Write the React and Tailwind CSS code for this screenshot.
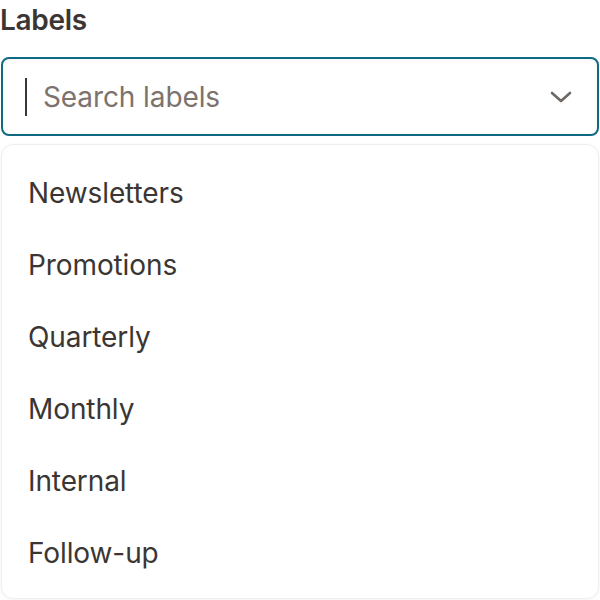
import { useState } from "react";

const labels = ["Newsletters", "Promotions", "Quarterly", "Monthly", "Internal", "Follow-up"];

const Chevron = () => (
   <svg width="24" height="14" viewBox="0 0 24 14" fill="none" className="text-[#6f6762]">
      <path d="M3 3l9 8 9-8" stroke="currentColor" strokeWidth="2.6" strokeLinecap="round" strokeLinejoin="round" />
   </svg>
);

const App = () => {
   const [query, setQuery] = useState("");

   return (
      <div className="w-[600px] h-[600px] overflow-hidden bg-white font-['Inter','Noto_Sans',sans-serif] text-[#3b3633]">
         <p className="h-[42px] pt-[4px] text-[28px] font-semibold leading-[32px] tracking-[-0.3px]">Labels</p>

         <div className="mt-[15px] mx-px h-[79px] flex items-center gap-x-[16px] pl-[22px] pr-[24px] rounded-[8px] border-2 border-[#0e6a80] shadow-[inset_0_2px_6px_rgba(0,0,0,0.04)]">
            <span className="w-[2px] h-[38px] bg-[#3b3633]" />
            <input
               value={query}
               onChange={(e) => setQuery(e.target.value)}
               placeholder="Search labels"
               className="flex-1 bg-transparent outline-none text-[28px] tracking-[-0.1px] placeholder:text-[#7c736d]"
            />
            <Chevron />
         </div>

         <ul className="mt-[8px] mx-px h-[455px] rounded-[12px] border border-[#f0eeec] shadow-[0_1px_4px_rgba(0,0,0,0.05)] pt-[12px]">
            {labels
               .filter((l) => l.toLowerCase().includes(query.toLowerCase()))
               .map((label) => (
                  <li key={label} className="h-[72px] flex items-center px-[26px] text-[28px] tracking-[-0.1px]">
                     {label}
                  </li>
               ))}
         </ul>
      </div>
   );
};

export default App;
